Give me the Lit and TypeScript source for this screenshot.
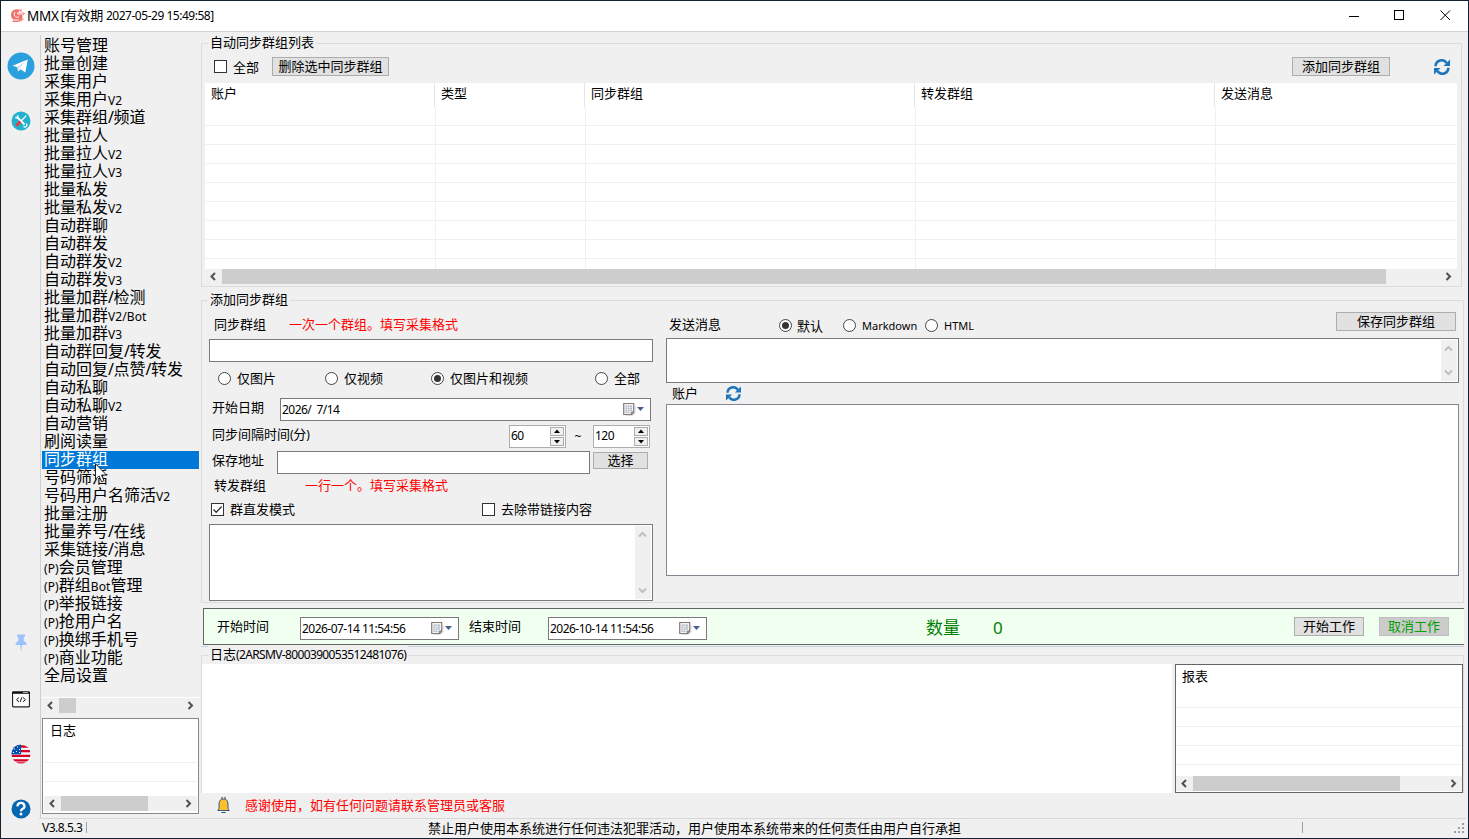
import { LitElement, html, css } from "lit";
import { customElement, property } from "lit/decorators.js";
import { classMap } from "lit/directives/class-map.js";

const base = css`
  * { box-sizing: border-box; }
  .chk { width: 13px; height: 13px; border: 1px solid #333; background: #fff; display: block; flex: none; }
  .chk svg { display: block; }
  .rad { width: 13px; height: 13px; border: 1px solid #444; border-radius: 50%; background: #fff; flex: none; display: grid; place-items: center; }
  .rad.on::after { content: ""; width: 7px; height: 7px; border-radius: 50%; background: #333; }
  .btn { border: 1px solid #adadad; background: #e1e1e1; height: 19px; line-height: 17px; text-align: center; white-space: nowrap; flex: none; }
`;

@customElement("scroll-bar")
class ScrollBar extends LitElement {
  @property({ type: Boolean }) vertical = false;
  static styles = css`
    :host { display: flex; background: #f0f0f0; height: 15px; flex: none; }
    :host([vertical]) { flex-direction: column; width: 16px; height: auto; justify-content: space-between; }
    svg { display: block; flex: none; }
    .thumb { background: #cdcdcd; height: 15px; width: var(--thumb, 0); }
    .gap { flex: 1; }
  `;
  render() {
    if (this.vertical)
      return html`
        <svg width="16" height="17"><path d="M4 10.5 L7.5 7 L11 10.5" fill="none" stroke="#bfbfbf" stroke-width="2" /></svg>
        <svg width="16" height="17"><path d="M4 6.5 L7.5 10 L11 6.5" fill="none" stroke="#bfbfbf" stroke-width="2" /></svg>`;
    return html`
      <svg width="17" height="15"><path d="M10 4 L6.5 7.5 L10 11" fill="none" stroke="#505050" stroke-width="2" /></svg>
      <div class="thumb"></div><div class="gap"></div>
      <svg width="17" height="15"><path d="M6.5 4 L10 7.5 L6.5 11" fill="none" stroke="#505050" stroke-width="2" /></svg>`;
  }
}

@customElement("date-field")
class DateField extends LitElement {
  @property() value = "";
  static styles = css`
    :host { display: flex; align-items: center; height: 23px; border: 1px solid #7a7a7a; background: #fff; box-sizing: border-box; padding: 0 5px 0 1px; white-space: pre; letter-spacing: -0.53px; font-size: 12px; }
    .v { flex: 1; }
    svg { display: block; }
  `;
  render() {
    return html`<span class="v">${this.value}</span>
      <svg width="22" height="15" viewBox="0 0 22 15">
        <path d="M2.500 13.300 h7 l2.500 -2.500 v-7" fill="none" stroke="#d8d4d4" />
        <path d="M0.700 1.500 h10 v9 l-2 2 h-8 z" fill="#f6f3f3" stroke="#857a78" stroke-width="1.200" />
        <path d="M11 9.500 l-3.200 3.200 v-3.200z" fill="#8a7f7d" />
        <path d="M2.500 3.500h6.500v6h-2v1.500h-4.500z" fill="#b3bccb" />
        <path d="M2.500 5.500h6.500M2.500 7.500h6.500M2.500 9.500h6.500M4.500 3.500v8M6.500 3.500v8" stroke="#f0f0f4" stroke-width="0.6" />
        <path d="M14 5 h7 l-3.500 4z" fill="#44608c" />
      </svg>`;
  }
}

@customElement("spin-field")
class SpinField extends LitElement {
  @property() value = "";
  static styles = css`
    :host { display: flex; height: 23px; width: 57px; border: 1px solid #abadb3; background: #fff; box-sizing: border-box; padding: 1px 0 1px 1px; font-size: 12px; letter-spacing: -0.5px; line-height: 17px; }
    .v { flex: 1; }
    .b { display: grid; grid-template-rows: 9px 9px; gap: 1px; padding-right: 1px; }
    .b svg { display: block; background: #f0f0f0; border: 1px solid #acacac; box-sizing: border-box; }
  `;
  render() {
    return html`<span class="v">${this.value}</span>
      <span class="b">
        <svg width="14" height="9" viewBox="0 0 12 7"><path d="M3 5 h6 l-3 -3.500z" /></svg>
        <svg width="14" height="9" viewBox="0 0 12 7"><path d="M3 2 h6 l-3 3.500z" /></svg>
      </span>`;
  }
}

const refresh = (s: number) => html`<svg width=${s} height=${s} viewBox="0 0 16 16">
  <g fill="none" stroke="#1c75bc" stroke-width="2.600">
    <path d="M1.600 7.200 A6 6 0 0 1 12.600 4" /><path d="M14.400 8.800 A6 6 0 0 1 3.400 12" />
  </g>
  <path d="M16 0.500 V7 H9.500z M0 15.500 V9 H6.500z" fill="#1c75bc" /></svg>`;

const MENU = [
  "账号管理", "批量创建", "采集用户", "采集用户V2", "采集群组/频道", "批量拉人", "批量拉人V2", "批量拉人V3",
  "批量私发", "批量私发V2", "自动群聊", "自动群发", "自动群发V2", "自动群发V3", "批量加群/检测", "批量加群V2/Bot",
  "批量加群V3", "自动群回复/转发", "自动回复/点赞/转发", "自动私聊", "自动私聊V2", "自动营销", "刷阅读量", "同步群组",
  "号码筛活", "号码用户名筛活V2", "批量注册", "批量养号/在线", "采集链接/消息", "(P)会员管理", "(P)群组Bot管理",
  "(P)举报链接", "(P)抢用户名", "(P)换绑手机号", "(P)商业功能", "全局设置",
];

@customElement("side-menu")
class SideMenu extends LitElement {
  static styles = css`
    :host { display: block; width: 157px; position: relative; font-size: 16px; }
    .item { height: 18px; line-height: 16px; padding-left: 2px; white-space: nowrap; }
    .sel { background: #0078d7; color: #fff; }
    .en { font-size: 12px; letter-spacing: 0.1px; }
    .sl { font-size: 16px; letter-spacing: -0.5px; }
    .sm { font-size: 12px; }
    .cursor { position: absolute; left: 53px; top: 426px; }
  `;
  render() {
    return html`${MENU.map((m) => html`<div class=${classMap({ item: true, sel: m === "同步群组" })}>${m
        .split(/([A-Za-z0-9()]+(?:\/Bot)?|\/)/)
        .filter((p) => p)
        .map((p) => (/^[A-Za-z0-9()]/.test(p) ? html`<span class="en">${p}</span>` : p === "/" ? html`<span class="sl">/</span>` : p))}</div>`)}
      <svg class="cursor" width="13" height="20" viewBox="0 0 13 20">
        <path d="M0.500 0.800 V16.200 L4.100 12.900 L6.600 18.800 L9 17.700 L6.500 12 H11.500z" fill="#fff" stroke="#111" stroke-width="0.9" />
      </svg>`;
  }
}

@customElement("icon-rail")
class IconRail extends LitElement {
  static styles = css`
    :host { display: flex; flex-direction: column; align-items: center; width: 39px; }
    svg { display: block; flex: none; }
    .tg { margin-top: 17px; } .tools { margin-top: 31px; } .space { flex: 1; }
    .pin { margin-bottom: 38px; } .code { margin-bottom: 36px; } .flag { margin-bottom: 35px; }
  `;
  render() {
    return html`
      <svg class="tg" width="28" height="28" viewBox="0 0 28 28">
        <circle cx="14" cy="14" r="13.500" fill="#2aa1de" />
        <path d="M5.500 13.700 L20.800 7.400 L18.300 20.500 L13.600 17.200 L11 19.500 L10.300 15.300z" fill="#fff" />
        <path d="M10.300 15.300 L18 9.700 L12 16 L11 19.500z" fill="#b9d9ec" />
      </svg>
      <svg class="tools" width="20" height="20" viewBox="0 0 20 20">
        <circle cx="10" cy="10" r="9.500" fill="#22b2cf" />
        <path d="M6.500 6.500 L13.500 13.500" stroke="#fff" stroke-width="1.900" />
        <path d="M6.500 4.300 L7 6.800 L4.300 6.500" stroke="#fff" stroke-width="1.500" fill="none" />
        <path d="M12.500 15.300 A1.900 1.900 0 1 0 15.300 12.600" fill="none" stroke="#fff" stroke-width="1.300" />
        <path d="M9.500 10.500 L15.300 4.700" stroke="#fff" stroke-width="1.200" />
        <path d="M5.200 14.800 L9.500 10.500" stroke="#e0413e" stroke-width="3" />
      </svg>
      <div class="space"></div>
      <svg class="pin" width="14" height="19" viewBox="0 0 14 19">
        <path d="M3 0.500 H11 V2.500 L9.800 3 V7 C12 8 12.600 9 12.600 11 H8 L7.200 18.500 L6.300 11 H1.500 C1.500 9 2.300 8 4.300 7 V3 L3 2.500z" fill="#9cc2fb" />
      </svg>
      <svg class="code" width="18" height="17" viewBox="0 0 18 17">
        <rect x="0.500" y="0.800" width="17" height="15" rx="1" fill="#fafafa" stroke="#222" stroke-width="1.200" />
        <path d="M0.500 1.800 H17.500" stroke="#111" stroke-width="2" /><path d="M11 1.500h5" stroke="#eee" stroke-width="0.7" />
        <path d="M7 6.500 L4.500 8.700 L7 10.800 M11 6.500 L13.500 8.700 L11 10.800 M9.800 6.300 L8.200 11" fill="none" stroke="#222" />
      </svg>
      <svg class="flag" width="20" height="20" viewBox="0 0 20 20">
        <clipPath id="c"><circle cx="10" cy="10" r="9.600" /></clipPath>
        <g clip-path="url(#c)"><rect width="20" height="20" fill="#f4f4f4" />
          <path d="M0 2.500h20M0 7.200h20M0 11.800h20M0 16.300h20M0 19.400h20" stroke="#d80027" stroke-width="2.300" />
          <rect width="10" height="10.400" fill="#0052b4" />
          <path d="M3 5h1M6 3h1M8 5.500h1M5 7.500h1M2 8.500h1M8 8.500h1" stroke="#fff" /></g>
      </svg>
      <svg width="20" height="20" viewBox="0 0 20 20">
        <circle cx="10" cy="10" r="9.500" fill="#0567b2" />
        <path d="M6.600 7.300 A3.400 3.200 0 1 1 11.300 10 Q10 10.700 10 12.200" fill="none" stroke="#fff" stroke-width="2.300" />
        <circle cx="10" cy="15" r="1.500" fill="#fff" />
      </svg>`;
  }
}

@customElement("app-root")
class AppRoot extends LitElement {
  static styles = [base, css`
    :host { display: flex; flex-direction: column; width: 1469px; height: 839px; box-sizing: border-box; overflow: hidden;
      background: #f0f0f0; border: 1px solid #14202e; color: #000; font: 13px/18px "Noto Sans", "Noto Sans CJK SC", sans-serif; }
    svg { display: block; }
    .title { height: 31px; flex: none; background: #fff; border-bottom: 1px solid #d2d4d4; display: flex; align-items: center; padding: 0 17px 1px 8px; white-space: pre; }
    .mmx { font-size: 13.5px; margin: 0 2px 0 1px; letter-spacing: -0.2px; }
    .en { font-size: 12px; letter-spacing: -0.48px; }
    .winbtns { margin-left: auto; display: grid; grid-template-columns: 45px 46px 11px; }
    .body { display: flex; height: 786px; flex: none; }
    .rail { display: flex; border-right: 1px solid #cfcfcf; margin-top: 3px; height: 784px; width: 40px; flex: none; }
    .side { width: 158px; margin-left: 1px; padding-top: 5px; display: flex; flex-direction: column; flex: none; }
    .side .hs { border-top: 1px solid #fff; height: 17px; width: 157px; margin: 12px 0 4px; --thumb: 17px; display: flex; align-items: stretch; }
    .hs scroll-bar { flex: 1; }
    .logbox { width: 157px; height: 96px; border: 1px solid #828790; background: #fff; padding: 0 1px 2px; display: flex; flex-direction: column; }
    .lines { flex: 1; background: repeating-linear-gradient(#fff 0 18px, #f0f0f0 18px 19px); }
    .logbox .h { padding: 2px 0 0 6px; height: 25px; }
    .logbox scroll-bar { --thumb: 87px; }
    .main { margin-left: 1px; width: 1263px; display: flex; flex-direction: column; flex: none; }
    .group { border: 1px solid #dcdcdc; }
    .legend { display: block; width: max-content; margin: -11px 0 0 6px; padding: 0 2px; height: 18px; background: #f0f0f0; white-space: nowrap; }
    .g1 { margin-top: 11px; width: 1261px; height: 244px; padding: 0 4px 0 3px; }
    .g1 .legend { margin-left: 3px; }
    .g1 .bar { display: grid; grid-template-columns: 19px 39px 117px 1fr 98px 60px; height: 32px; align-items: center; padding: 0 7px 1px 9px; }
    .g1 .bar .ref { justify-self: end; padding-top: 1px; }
    .table { height: 186px; background: #fff; display: grid; grid-template-rows: 24px 1fr; }
    .cols { display: grid; grid-template-columns: 230px 150px 330px 300px 1fr; }
    .cols > * { border-right: 1px solid #e5e5e5; padding: 1px 0 0 6px; }
    .cols > *:last-child { border-right: 0; }
    .grid { background: repeating-linear-gradient(#fff 0 18px, #f0f0f0 18px 19px); grid-template-columns: 231px 150px 330px 300px 1fr; }
    .grid > * { border-right: 1px solid #f0f0f0; }
    .g1 scroll-bar { --thumb: 1164px; }
    .g2 { margin-top: 13px; width: 1263px; height: 303px; display: flex; flex-direction: column; }
    .cont { display: grid; grid-template-columns: 444px 793px; column-gap: 13px; padding-left: 7px; }
    .cont > * { margin-top: -7px; }
    .g2 .legend { flex: none; }
    .lrow { height: 38px; padding: 14px 0 0 5px; display: flex; align-items: flex-start; }
    .red { color: #f00; }
    .lrow .red { margin-left: 23px; }
    .inp { border: 1px solid #7a7a7a; background: #fff; height: 23px; display: block; }
    .radios { height: 32px; display: grid; align-items: center; grid-template-columns: 107px 106px 164px auto; padding-left: 9px; }
    .opt { display: flex; align-items: center; gap: 6px; white-space: nowrap; }
    .date { display: grid; grid-template-columns: 68px 371px; margin: 4px 0; height: 23px; padding-left: 3px; }
    .intv { display: grid; grid-template-columns: 297px 57px 27px 57px; height: 26px; padding-left: 3px; }
    .tilde { text-align: center; font-size: 12px; padding: 3px 3px 0 0; }
    .save { display: grid; grid-template-columns: 65px 313px 55px; height: 25px; padding-left: 3px; }
    .save .btn { height: 17px; line-height: 15px; margin: 1px 0 0 3px; width: 55px; }
    .fwd { display: flex; padding-left: 5px; gap: 39px; height: 18px; }
    .checks { display: grid; grid-template-columns: 271px auto; padding-left: 2px; margin: 6px 0; height: 18px; align-items: center; }
    .area { border: 1px solid #7a7a7a; background: #fff; display: flex; justify-content: flex-end; padding: 1px; }
    .a1 { height: 77px; } .a2 { height: 45px; }
    .top { height: 37px; display: grid; grid-template-columns: 110px 64px 82px 1fr 120px; padding: 11px 3px 0 3px; align-items: start; }
    .top .opt { height: 21px; gap: 5px; margin-top: 3px; }
    .top .opt .en { font-size: 11px; letter-spacing: 0; padding-left: 1px; }
    .top .lbl { padding-top: 3px; }
    .acc { height: 21px; display: flex; align-items: center; gap: 28px; padding: 0 0 1px 6px; }
    .list { height: 172px; border: 1px solid #828790; background: #fff; }
    .green { margin: 5px 0 0 2px; width: 1261px; height: 37px; border: 1px solid #646464; border-right: 0; background: #f0fff0; display: grid;
      grid-template-columns: 83px 159px 10px 79px 159px 219px 67px 1fr 70px 15px 70px 15px; padding-left: 13px; align-items: start; }
    .green .lbl { padding-top: 8px; } .green date-field { margin-top: 8px; }
    .green .btn { margin-top: 8px; }
    .num { color: #008000; font-size: 17px; padding-top: 10px; }
    .off { background: #ccc; border-color: #bfbfbf; color: #00a000; }
    .blue { height: 1px; background: #c6d0e2; margin-top: 1px; }
    .g3 { margin-top: 8px; width: 1263px; height: 138px; border-bottom: 0; }
    .g3 .legend .en { letter-spacing: -0.64px; }
    .g3 .cont3 { display: flex; gap: 3px; margin-top: 1px; height: 129px; }
    .white { background: #fff; width: 970px; }
    .report { width: 288px; border: 1px solid #646464; background: #fff; display: flex; flex-direction: column; padding-bottom: 1px; flex: none; }
    .report .h { padding: 2px 0 0 6px; height: 24px; } .report scroll-bar { --thumb: 207px; }
    .thanks { display: flex; align-items: center; padding: 0 0 1px 16px; height: 24px; gap: 15px; }
    .status { flex: none; height: 20px; margin-left: 38px; width: 1427px; border-top: 1px solid #d7d7d7; display: grid;
      grid-template-columns: 44px 1px 341px 874px 1px 1fr; padding-left: 3px; align-items: start; }
    .sep { height: 11px; background: #a0a0a0; margin-top: 3px; } .grip { justify-self: end; margin-top: 3px; }
  `];

  render() {
    return html`
      <div class="title">
        <svg width="17" height="16" viewBox="0 0 17 16">
          <path d="M2 7 C2 2 7 0 11 2 L9 5 L12 5 C15 8 13 14 9 14 L3 14 L5 12 C3 11 2 9 2 7z" fill="#f0736c" />
          <path d="M10 1.500 l3 -0.500 l-1 4z M13 4 l3 1 l-2 3z M13 10 l2 1 l-3 3z" fill="#f39a94" />
          <path d="M6 4 C4 7 6 10 10 9 M8 5 q2 2 4 1 M5 12 h5" stroke="#fff" stroke-width="1" fill="none" />
        </svg><span class="mmx">MMX</span><span><span class="en">[</span>有效期<span class="en"> 2027-05-29 15:49:58]</span></span>
        <div class="winbtns">
          <svg width="11" height="12"><path d="M0 6.500h10" stroke="#000" /></svg>
          <svg width="11" height="12"><rect x="0.500" y="0.500" width="9" height="9" fill="none" stroke="#000" /></svg>
          <svg width="11" height="12"><path d="M0.500 0.500 L10 10 M10 0.500 L0.500 10" stroke="#000" /></svg>
        </div>
      </div>
      <div class="body">
        <div class="rail"><icon-rail></icon-rail></div>
        <div class="side">
          <side-menu></side-menu>
          <div class="hs"><scroll-bar></scroll-bar></div>
          <div class="logbox"><div class="h">日志</div><div class="lines"></div><scroll-bar></scroll-bar></div>
        </div>
        <div class="main">
          <div class="group g1">
            <span class="legend">自动同步群组列表</span>
            <div class="bar">
              <span class="chk"></span><span>全部</span><span class="btn">删除选中同步群组</span><span></span>
              <span class="btn">添加同步群组</span><span class="ref">${refresh(16)}</span>
            </div>
            <div class="table">
              <div class="cols"><span>账户</span><span>类型</span><span>同步群组</span><span>转发群组</span><span>发送消息</span></div>
              <div class="cols grid"><i></i><i></i><i></i><i></i><i></i></div>
            </div>
            <scroll-bar></scroll-bar>
          </div>

          <div class="group g2">
            <span class="legend">添加同步群组</span>
            <div class="cont">
              <div>
                <div class="lrow"><span>同步群组</span><span class="red">一次一个群组。填写采集格式</span></div>
                <span class="inp"></span>
                <div class="radios">
                  ${["仅图片", "仅视频", "仅图片和视频", "全部"].map((t, i) => html`<span class="opt"><span class=${classMap({ rad: true, on: i === 2 })}></span>${t}</span>`)}
                </div>
                <div class="date"><span>开始日期</span><date-field value="2026/  7/14"></date-field></div>
                <div class="intv"><span>同步间隔时间<span class="en">(</span>分<span class="en">)</span></span><spin-field value="60"></spin-field><span class="tilde">~</span><spin-field value="120"></spin-field></div>
                <div class="save"><span>保存地址</span><span class="inp"></span><span class="btn">选择</span></div>
                <div class="fwd"><span>转发群组</span><span class="red">一行一个。填写采集格式</span></div>
                <div class="checks">
                  <span class="opt"><span class="chk"><svg width="11" height="11"><path d="M1.500 5.500 L4.200 8.300 L9.700 2.500" fill="none" stroke="#333" stroke-width="1.300" /></svg></span>群直发模式</span>
                  <span class="opt"><span class="chk"></span>去除带链接内容</span>
                </div>
                <div class="area a1"><scroll-bar vertical></scroll-bar></div>
              </div>
              <div>
                <div class="top">
                  <span class="lbl">发送消息</span>
                  <span class="opt"><span class="rad on"></span>默认</span>
                  <span class="opt"><span class="rad"></span><span class="en">Markdown</span></span>
                  <span class="opt"><span class="rad"></span><span class="en">HTML</span></span>
                  <span class="btn">保存同步群组</span>
                </div>
                <div class="area a2"><scroll-bar vertical></scroll-bar></div>
                <div class="acc"><span>账户</span>${refresh(15)}</div>
                <div class="list"></div>
              </div>
            </div>
          </div>

          <div class="green">
            <span class="lbl">开始时间</span><date-field value="2026-07-14 11:54:56"></date-field><span></span>
            <span class="lbl">结束时间</span><date-field value="2026-10-14 11:54:56"></date-field><span></span>
            <span class="num">数量</span><span class="num">0</span>
            <span class="btn">开始工作</span><span></span><span class="btn off">取消工作</span><span></span>
          </div>
          <div class="blue"></div>

          <div class="group g3">
            <span class="legend">日志<span class="en">(2ARSMV-8000390053512481076)</span></span>
            <div class="cont3">
              <div class="white"></div>
              <div class="report"><div class="h">报表</div><div class="lines"></div><scroll-bar></scroll-bar></div>
            </div>
          </div>
          <div class="thanks">
            <svg width="13" height="18" viewBox="0 0 13 18">
              <path d="M5 3 C2.500 4 2 6 2 9 V12.500 L0.800 14.500 H12.200 L11 12.500 V9 C11 6 10.500 4 8 3z" fill="#fdbf2d" stroke="#274b7a" stroke-width="0.9" />
              <path d="M5 3 V0.800 M8 3 V0.800 M4.500 16.500 h4" stroke="#274b7a" />
            </svg>
            <span class="red">感谢使用，如有任何问题请联系管理员或客服</span>
          </div>
        </div>
      </div>
      <div class="status">
        <span class="en">V3.8.5.3</span><span class="sep"></span><span></span>
        <span>禁止用户使用本系统进行任何违法犯罪活动，用户使用本系统带来的任何责任由用户自行承担</span><span class="sep"></span>
        <svg class="grip" width="12" height="12" fill="#a0a0a0"><path d="M8 1h2v2h-2zM4 5h2v2h-2zM8 5h2v2h-2zM0 9h2v2h-2zM4 9h2v2h-2zM8 9h2v2h-2z" /></svg>
      </div>`;
  }
}
